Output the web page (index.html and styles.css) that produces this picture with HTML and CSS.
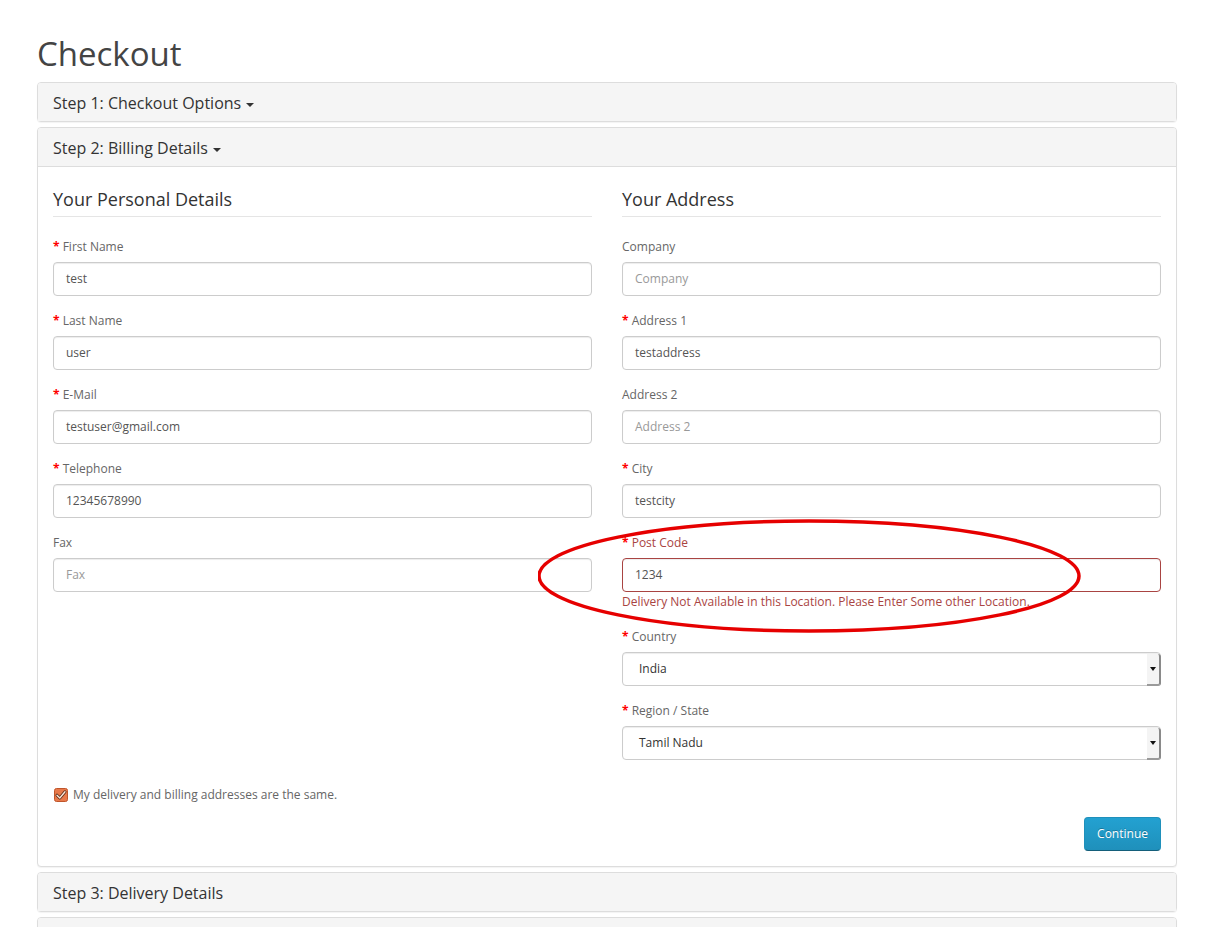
FILE: index.html
```html
<!DOCTYPE html>
<html>
<head>
<meta charset="utf-8">
<link rel="stylesheet" href="styles.css">
</head>
<body>
<div class="container">
  <h1 class="page-title">Checkout</h1>
  <div class="panel-group">
    <div class="panel">
      <div class="panel-heading"><span class="panel-title">Step 1: Checkout Options <i class="caret"></i></span></div>
    </div>
    <div class="panel">
      <div class="panel-heading"><span class="panel-title">Step 2: Billing Details <i class="caret"></i></span></div>
      <div class="panel-body">
        <div class="row">
          <div class="col">
            <div class="legend">Your Personal Details</div>
            <div class="form-group">
              <label class="req">First Name</label>
              <div class="input">test</div>
            </div>
            <div class="form-group">
              <label class="req">Last Name</label>
              <div class="input">user</div>
            </div>
            <div class="form-group">
              <label class="req">E-Mail</label>
              <div class="input">testuser@gmail.com</div>
            </div>
            <div class="form-group">
              <label class="req">Telephone</label>
              <div class="input">12345678990</div>
            </div>
            <div class="form-group">
              <label>Fax</label>
              <div class="input placeholder">Fax</div>
            </div>
          </div>
          <div class="col">
            <div class="legend">Your Address</div>
            <div class="form-group">
              <label>Company</label>
              <div class="input placeholder">Company</div>
            </div>
            <div class="form-group">
              <label class="req">Address 1</label>
              <div class="input">testaddress</div>
            </div>
            <div class="form-group">
              <label>Address 2</label>
              <div class="input placeholder">Address 2</div>
            </div>
            <div class="form-group">
              <label class="req">City</label>
              <div class="input">testcity</div>
            </div>
            <div class="form-group has-error">
              <label class="req">Post Code</label>
              <div class="input">1234</div>
              <div class="text-danger">Delivery Not Available in this Location. Please Enter Some other Location.</div>
            </div>
            <div class="form-group">
              <label class="req">Country</label>
              <div class="select"><span class="select-value">India</span><span class="select-btn"><i class="arrow"></i></span></div>
            </div>
            <div class="form-group">
              <label class="req">Region / State</label>
              <div class="select"><span class="select-value">Tamil Nadu</span><span class="select-btn"><i class="arrow"></i></span></div>
            </div>
          </div>
        </div>
        <div class="checkbox">
          <svg class="cb" width="14" height="14" viewBox="0 0 14 14"><rect x="0.5" y="0.5" width="13" height="13" rx="2" fill="#e8794a" stroke="#c0552a"/><path d="M3 7.2 L5.8 10 L11 3.8" fill="none" stroke="#5a2a14" stroke-width="3" stroke-linecap="round" stroke-linejoin="round"/><path d="M3 7.2 L5.8 10 L11 3.8" fill="none" stroke="#fbe5d8" stroke-width="1.4" stroke-linecap="round" stroke-linejoin="round"/></svg>
          <span>My delivery and billing addresses are the same.</span>
        </div>
        <div class="buttons">
          <button class="btn-primary">Continue</button>
        </div>
      </div>
      <svg class="annotation" width="560" height="120" viewBox="0 0 560 120"><ellipse cx="271" cy="58" rx="270" ry="55" fill="none" stroke="#e60000" stroke-width="3.5"/></svg>
    </div>
    <div class="panel">
      <div class="panel-heading"><span class="panel-title">Step 3: Delivery Details</span></div>
    </div>
    <div class="panel">
      <div class="panel-heading"></div>
    </div>
  </div>
</div>
</body>
</html>
```
FILE: styles.css
```css
html, body {
  margin: 0;
  padding: 0;
  background: #fff;
}
body {
  font-family: "Open Sans", "DejaVu Sans", sans-serif;
  font-size: 12px;
  line-height: 20px;
  color: #666;
}
.container {
  width: 1140px;
  margin: 0 auto;
  padding: 36px 15px 0;
}
.page-title {
  font-size: 33px;
  font-weight: normal;
  color: #444;
  line-height: 36px;
  margin: 0 0 10px;
}
.panel-group {
  display: flex;
  flex-direction: column;
  gap: 5px;
}
.panel {
  position: relative;
  border: 1px solid #ddd;
  border-radius: 4px;
  background: #fff;
  box-shadow: 0 1px 1px rgba(0,0,0,0.05);
}
.panel-heading {
  background: #f5f5f5;
  border-radius: 3px 3px 0 0;
  padding: 10px 15px 8px;
  height: 20px;
}
.panel-body {
  border-top: 1px solid #ddd;
  padding: 15px;
}
.panel-title {
  font-size: 16px;
  line-height: 20px;
  color: #333;
}
.caret {
  display: inline-block;
  width: 0;
  height: 0;
  margin-left: 1px;
  vertical-align: middle;
  border-top: 4px solid #333;
  border-left: 4px solid transparent;
  border-right: 4px solid transparent;
}
.row {
  display: flex;
  gap: 30px;
}
.col {
  flex: 1;
  min-width: 0;
}
.legend {
  font-size: 18px;
  line-height: 20px;
  color: #333;
  padding: 7px 0;
  border-bottom: 1px solid #e5e5e5;
  margin-bottom: 20px;
}
.form-group {
  margin-bottom: 15px;
}
.form-group label {
  display: block;
  line-height: 20px;
  margin-bottom: 5px;
}
.req::before {
  content: "* ";
  color: #f00;
  font-weight: bold;
}
.input {
  box-sizing: border-box;
  height: 34px;
  padding: 6px 12px;
  font-size: 12px;
  line-height: 20px;
  color: #555;
  border: 1px solid #ccc;
  border-radius: 4px;
  box-shadow: inset 0 1px 1px rgba(0,0,0,0.075);
  background: #fff;
}
.input.placeholder {
  color: #999;
}
.has-error label {
  color: #a94442;
}
.has-error .input {
  border-color: #a94442;
}
.text-danger {
  color: #a94442;
  line-height: 20px;
}
.select {
  position: relative;
  box-sizing: border-box;
  height: 34px;
  padding: 6px 16px;
  line-height: 20px;
  color: #333;
  border: 1px solid #ccc;
  border-radius: 4px;
  box-shadow: inset 0 1px 1px rgba(0,0,0,0.075);
}
.select-btn {
  position: absolute;
  top: 1px;
  right: -1px;
  bottom: -1px;
  width: 12px;
  background: #f4f4f4;
  border-right: 2px solid #8a8a8a;
  border-bottom: 2px solid #9a9a9a;
  border-radius: 0 3px 3px 0;
  display: flex;
  align-items: center;
  justify-content: center;
}
.arrow {
  display: block;
  width: 0;
  height: 0;
  border-top: 4px solid #111;
  border-left: 3px solid transparent;
  border-right: 3px solid transparent;
}
.checkbox {
  display: flex;
  align-items: center;
  gap: 5px;
  margin-top: 10px;
  height: 20px;
  padding-left: 1px;
}
.cb {
  display: block;
  flex: none;
}
.buttons {
  display: flex;
  justify-content: flex-end;
  margin-top: 12px;
}
.btn-primary {
  font-family: "Open Sans", "DejaVu Sans", sans-serif;
  font-size: 12px;
  line-height: 20px;
  color: #fff;
  padding: 6px 12px;
  height: 34px;
  border: 1px solid;
  border-color: #1f90bb #1f90bb #145e7a;
  border-radius: 4px;
  background: linear-gradient(to bottom, #23a1d1, #1f90bb);
  text-shadow: 0 -1px 0 rgba(0,0,0,0.25);
}
.annotation {
  position: absolute;
  left: 500px;
  top: 390px;
  pointer-events: none;
}
```
